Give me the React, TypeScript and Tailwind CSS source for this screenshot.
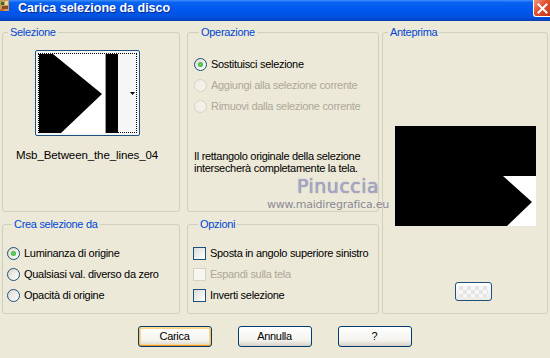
import type { ReactNode } from "react";

function Radio({ checked, disabled }: { checked?: boolean; disabled?: boolean }) {
  return (
    <span
      className={
        disabled
          ? "flex w-[13px] h-[13px] shrink-0 rounded-full border border-[#d6d3c6] bg-[#f3f1e7]"
          : "flex w-[13px] h-[13px] shrink-0 items-center justify-center rounded-full border border-[#1c5180] bg-[linear-gradient(135deg,#dcd9cc,#ffffff)]"
      }
    >
      {checked && !disabled && (
        <span className="w-[5px] h-[5px] rounded-full bg-[radial-gradient(circle,#6fdc6f,#21a121)]" />
      )}
    </span>
  );
}

function Check({ disabled }: { disabled?: boolean }) {
  return (
    <span
      className={
        disabled
          ? "block w-[13px] h-[13px] shrink-0 border border-[#d6d3c6] bg-[#f7f6f0]"
          : "block w-[13px] h-[13px] shrink-0 border border-[#1c5180] bg-[linear-gradient(135deg,#dcdcd7,#ffffff)]"
      }
    />
  );
}

function Option({
  control,
  label,
  disabled,
}: {
  control: ReactNode;
  label: string;
  disabled?: boolean;
}) {
  return (
    <div className="flex items-center gap-[4px] h-[21px] whitespace-nowrap">
      {control}
      <span className={disabled ? "text-[#aca899]" : "text-black"}>{label}</span>
    </div>
  );
}

function Group({
  title,
  className,
  children,
}: {
  title: string;
  className: string;
  children: ReactNode;
}) {
  return (
    <fieldset className={"border border-[#d0d0bf] rounded-[3px] " + className}>
      <legend className="ml-[5px] px-[2px] leading-[13px] text-[#0046d5]">{title}</legend>
      {children}
    </fieldset>
  );
}

function XpButton({ label, focused }: { label: string; focused?: boolean }) {
  return (
    <button
      className={
        "w-[74px] h-[21px] rounded-[3px] border border-[#003c74] bg-[linear-gradient(to_bottom,#ffffff,#f4f3ee_70%,#d8d2c6)] text-[11px] text-black leading-none " +
        (focused
          ? "shadow-[inset_0_1px_0_#ffdb8c,inset_0_-1px_0_#e5972d,inset_1px_0_0_#f8c35c,inset_-1px_0_0_#f8c35c,inset_0_0_0_2px_#fcd48a]"
          : "shadow-[inset_0_-1px_0_#d6d0c5]")
      }
    >
      {label}
    </button>
  );
}

export default function App() {
  return (
    <div className="relative w-[550px] h-[358px] overflow-hidden bg-[#ece9d8] font-['Liberation_Sans',Arial,sans-serif] text-[11px] tracking-[-0.3px]">
      {/* Title bar */}
      <div className="flex items-center h-[21px] bg-[linear-gradient(to_bottom,#3d8ffd_0%,#0a62f2_12%,#0058ee_45%,#0053e3_80%,#0045cc_100%)] border-b border-[#0a3fb0] tracking-normal">
        <svg width="12" height="14" viewBox="0 0 12 14" className="shrink-0 self-start">
          <rect x="0" y="0" width="9" height="11" fill="#c89a5a" />
          <rect x="1" y="2" width="3" height="3" fill="#3b6a2a" />
          <rect x="5" y="1" width="3" height="4" fill="#e8d6a0" />
          <rect x="2" y="6" width="6" height="3" fill="#8a4b22" />
          <rect x="0" y="9" width="4" height="2" fill="#d66a2a" />
        </svg>
        <span className="ml-[6px] pb-[4px] text-[12.5px] font-bold text-white [text-shadow:1px_1px_0_#0a2a8a]">
          Carica selezione da disco
        </span>
        <div className="ml-auto self-start flex items-center justify-center w-[17px] h-[17px] rounded-bl-[3px] border-l border-b border-white bg-[linear-gradient(135deg,#f19b7f,#e1502e_45%,#c7351a)]">
          <svg width="11" height="11" viewBox="0 0 11 11">
            <path d="M1.5 1.5 L9.5 9.5 M9.5 1.5 L1.5 9.5" stroke="white" strokeWidth="2" strokeLinecap="square" />
          </svg>
        </div>
      </div>

      {/* Body */}
      <div className="flex pl-[2px] pt-[5px]">
        <div className="flex flex-col w-[178px]">
          <Group title="Selezione" className="h-[186px] flex flex-col items-center">
            <div className="mt-[11px] mr-[8px] w-[105px] h-[86px] rounded-[2px] border border-[#1c5180] bg-[#f4f4f2] p-[2px]">
              <div className="flex w-full h-full border border-dotted border-black bg-white">
                <svg width="79" height="79" viewBox="0 0 79 79" className="shrink-0">
                  <rect width="79" height="79" fill="#ffffff" />
                  <polygon points="0,0 14,0 63,40 22,79 0,79" fill="#000" />
                  <rect x="66" y="0" width="1" height="79" fill="#9a9a9a" />
                  <rect x="67" y="0" width="12" height="79" fill="#000" />
                </svg>
                <div className="flex flex-1 items-center justify-end pr-[1px] bg-[#f6f6f6]">
                  <svg width="5" height="3" viewBox="0 0 5 3">
                    <polygon points="0,0 5,0 2.5,3" fill="#000" />
                  </svg>
                </div>
              </div>
            </div>
            <div className="mt-[11px] mr-[8px] text-[11.5px] tracking-[-0.1px] text-black whitespace-nowrap">
              Msb_Between_the_lines_04
            </div>
          </Group>
          <Group title="Crea selezione da" className="mt-[6px] h-[96px] pl-[4px] pt-[12px]">
            <Option control={<Radio checked />} label="Luminanza di origine" />
            <Option control={<Radio />} label="Qualsiasi val. diverso da zero" />
            <Option control={<Radio />} label="Opacità di origine" />
          </Group>
        </div>

        <div className="flex flex-col ml-[7px] w-[192px]">
          <Group title="Operazione" className="h-[186px] pl-[6px] pt-[15px]">
            <Option control={<Radio checked />} label="Sostituisci selezione" />
            <Option control={<Radio disabled />} label="Aggiungi alla selezione corrente" disabled />
            <Option control={<Radio disabled />} label="Rimuovi dalla selezione corrente" disabled />
            <p className="mt-[33px] leading-[12px] text-black whitespace-nowrap">
              Il rettangolo originale della selezione
              <br />
              intersecherà completamente la tela.
            </p>
          </Group>
          <Group title="Opzioni" className="mt-[6px] h-[96px] pl-[5px] pt-[12px]">
            <Option control={<Check />} label="Sposta in angolo superiore sinistro" />
            <Option control={<Check disabled />} label="Espandi sulla tela" disabled />
            <Option control={<Check />} label="Inverti selezione" />
          </Group>
        </div>

        <Group title="Anteprima" className="ml-[3px] w-[166px] h-[288px] flex flex-col items-center">
          <svg width="141" height="100" viewBox="0 0 141 100" className="mt-[87px] shrink-0">
            <rect width="141" height="100" fill="#000" />
            <polygon points="108,50 141,50 141,100 112,100 137,76" fill="#fff" />
          </svg>
          <div className="mt-[56px] ml-[17px] w-[37px] h-[19px] rounded-[3px] border border-[#1c5180] bg-[linear-gradient(to_bottom,#ffffff,#eceae3)] p-[3px]">
            <div className="w-full h-full bg-[repeating-conic-gradient(#f7f7f7_0%_25%,#e4e4e4_0%_50%)] bg-[length:8px_8px]" />
          </div>
        </Group>
      </div>

      {/* Buttons */}
      <div className="flex justify-center gap-[26px] mt-[12px] pr-[1px]">
        <XpButton label="Carica" focused />
        <XpButton label="Annulla" />
        <XpButton label="?" />
      </div>

      {/* Watermark */}
      <div className="absolute left-[297px] top-[177px] text-[19px] leading-none tracking-[0.5px] text-[#a8a8c8] [text-shadow:0_0_1px_#6e6e90] font-['DejaVu_Sans',sans-serif]">
        Pinuccia
      </div>
      <div className="absolute left-[267px] top-[199px] text-[11px] leading-none text-[#8a8a96] font-['DejaVu_Sans',sans-serif] tracking-[-0.2px]">
        www.maidiregrafica.eu
      </div>
    </div>
  );
}
